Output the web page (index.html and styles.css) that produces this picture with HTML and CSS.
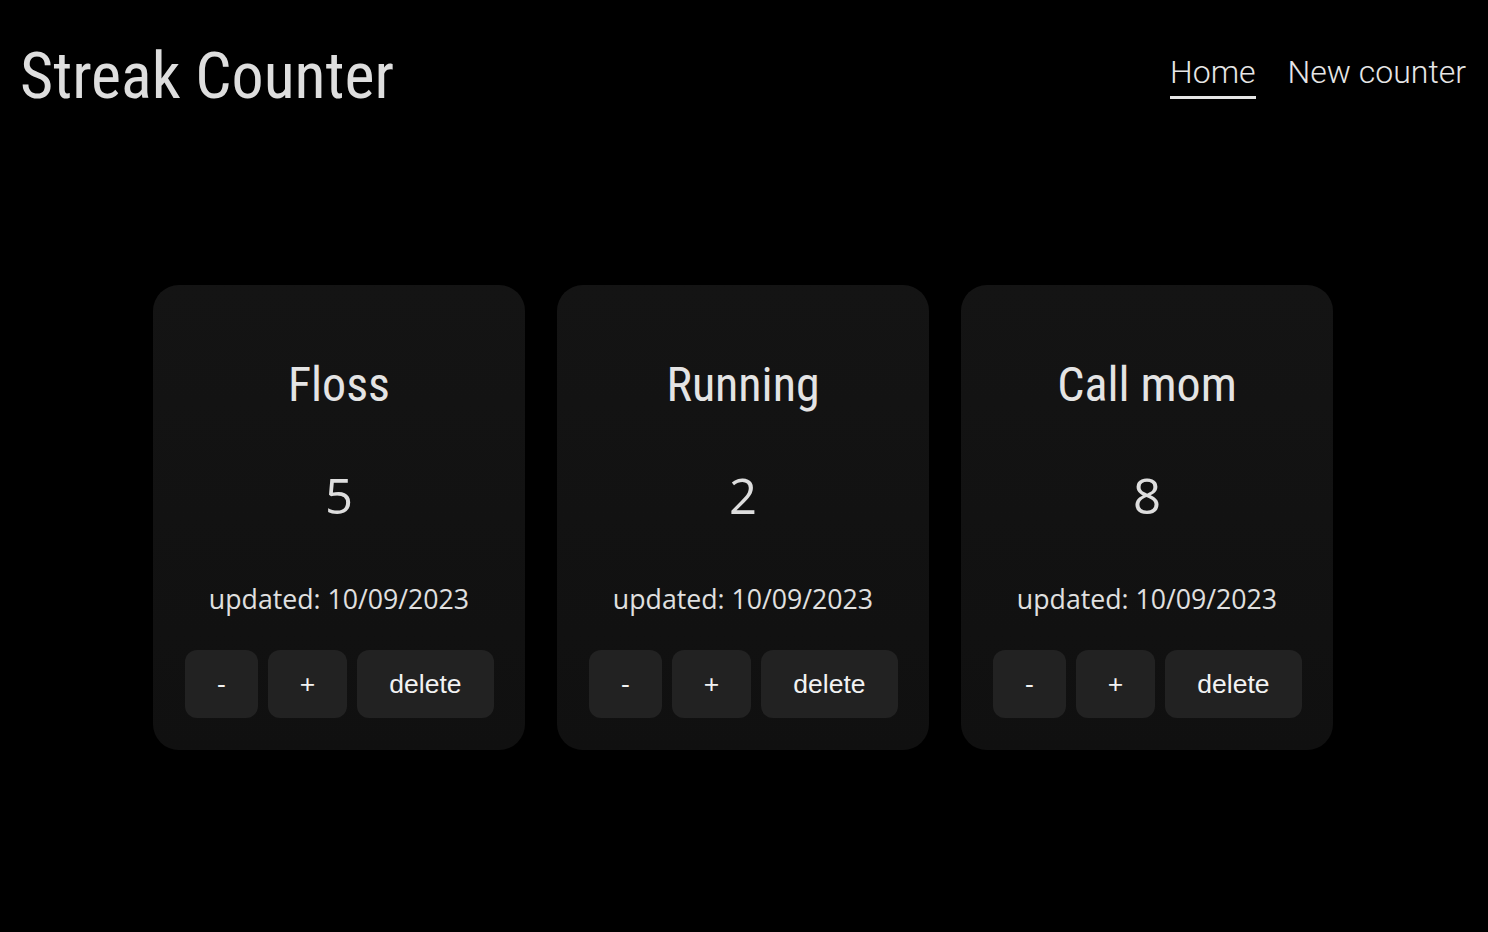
FILE: index.html
```html
<!DOCTYPE html>
<html lang="en">
<head>
<meta charset="utf-8">
<title>Streak Counter</title>
<link rel="stylesheet" href="styles.css">
</head>
<body>
<header class="topbar">
  <h1 class="brand"><span class="cond">Streak Counter</span></h1>
  <nav class="nav">
    <a class="nav-link active" href="#">Home</a>
    <a class="nav-link" href="#">New counter</a>
  </nav>
</header>
<main class="grid">
  <section class="card">
    <h2 class="card-title"><span class="cond">Floss</span></h2>
    <div class="count">5</div>
    <p class="updated">updated: 10/09/2023</p>
    <div class="actions">
      <button class="btn">-</button>
      <button class="btn">+</button>
      <button class="btn">delete</button>
    </div>
  </section>
  <section class="card">
    <h2 class="card-title"><span class="cond">Running</span></h2>
    <div class="count">2</div>
    <p class="updated">updated: 10/09/2023</p>
    <div class="actions">
      <button class="btn">-</button>
      <button class="btn">+</button>
      <button class="btn">delete</button>
    </div>
  </section>
  <section class="card">
    <h2 class="card-title"><span class="cond">Call mom</span></h2>
    <div class="count">8</div>
    <p class="updated">updated: 10/09/2023</p>
    <div class="actions">
      <button class="btn">-</button>
      <button class="btn">+</button>
      <button class="btn">delete</button>
    </div>
  </section>
</main>
</body>
</html>
```
FILE: styles.css
```css
* { box-sizing: border-box; }
html, body { margin: 0; padding: 0; background: #000; }
body {
  color: #e2e2e2;
  font-family: "Open Sans", "Noto Sans", sans-serif;
  min-height: 932px;
}
.topbar {
  display: flex;
  justify-content: space-between;
  align-items: flex-start;
  padding: 0 22px 0 20px;
}
.brand {
  margin: 0;
  padding-top: 39px;
  font-family: Roboto, sans-serif;
  font-weight: 400;
  font-size: 64px;
  line-height: 76px;
  color: #dedede;
}
.cond {
  display: inline-block;
  font-stretch: 80%;
  font-variation-settings: "wdth" 80;
}
.nav {
  display: flex;
  gap: 32px;
  padding-top: 52px;
}
.nav-link {
  font-family: Roboto, sans-serif;
  font-weight: 300;
  font-size: 32px;
  line-height: 40px;
  color: #e6e6e6;
  text-decoration: none;
  padding-bottom: 4px;
  border-bottom: 3px solid transparent;
}
.nav-link.active { border-bottom-color: #e6e6e6; }
.grid {
  display: flex;
  justify-content: center;
  gap: 32px;
  padding-top: 170px;
  padding-right: 2px;
}
.card {
  width: 372px;
  height: 465px;
  background: linear-gradient(#141414, #101010);
  border-radius: 26px;
  padding: 70px 32px 32px;
  display: flex;
  flex-direction: column;
  align-items: stretch;
  text-align: center;
}
.card-title {
  margin: 0;
  font-family: Roboto, sans-serif;
  font-weight: 400;
  font-size: 48px;
  line-height: 60px;
  color: #e4e4e4;
}
.count {
  margin-top: 50px;
  font-size: 49px;
  line-height: 60px;
  color: #dedede;
}
.updated {
  margin: 56px 0 0;
  font-size: 26.7px;
  line-height: 36px;
  color: #e0e0e0;
}
.actions {
  margin-top: 33px;
  display: flex;
  gap: 10px;
}
.btn {
  font-family: "Liberation Sans", Arial, sans-serif;
  font-size: 26.5px;
  line-height: 30px;
  height: 68px;
  padding: 0 32px;
  background: #222;
  color: #f2f2f2;
  border: none;
  border-radius: 12px;
}
```
